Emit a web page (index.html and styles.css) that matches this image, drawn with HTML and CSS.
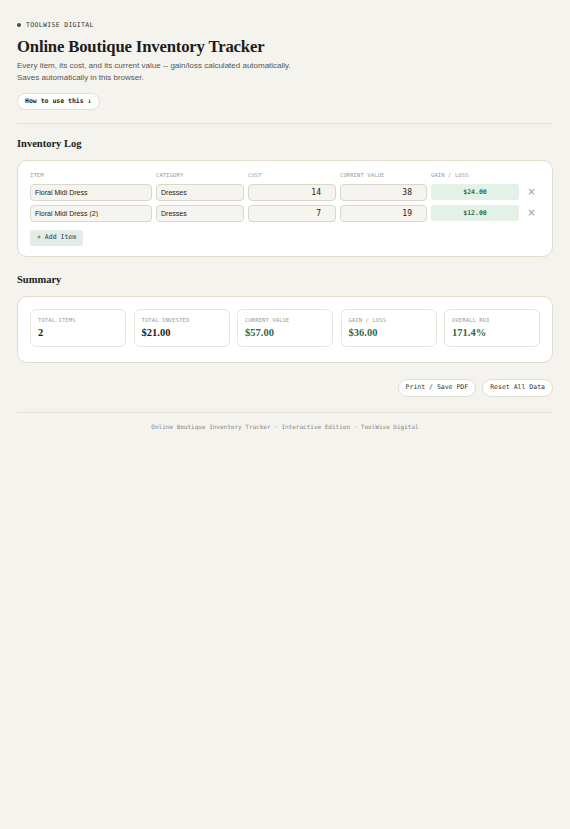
FILE: index.html
```html
<!DOCTYPE html>
<html lang="en">
<head>
<meta charset="utf-8">
<title>Online Boutique Inventory Tracker</title>
<link rel="stylesheet" href="styles.css">
</head>
<body>
<div class="page">
  <header class="hero">
    <div class="brand"><span class="brand-dot"></span>TOOLWISE DIGITAL</div>
    <h1 class="title">Online Boutique Inventory Tracker</h1>
    <p class="lead">Every item, its cost, and its current value -- gain/loss calculated automatically.<br>Saves automatically in this browser.</p>
    <button class="pill pill-bold">How to use this ↓</button>
  </header>
  <hr class="rule">
  <section class="section">
    <h2 class="section-title">Inventory Log</h2>
    <div class="card">
      <div class="grid head">
        <div class="col-label">ITEM</div>
        <div class="col-label">CATEGORY</div>
        <div class="col-label">COST</div>
        <div class="col-label">CURRENT VALUE</div>
        <div class="col-label">GAIN / LOSS</div>
        <div></div>
      </div>
      <div class="rows">
        <div class="grid row">
          <input class="field" value="Floral Midi Dress">
          <input class="field" value="Dresses">
          <input class="field num" value="14">
          <input class="field num" value="38">
          <div class="gain">$24.00</div>
          <button class="remove">×</button>
        </div>
        <div class="grid row">
          <input class="field" value="Floral Midi Dress (2)">
          <input class="field" value="Dresses">
          <input class="field num" value="7">
          <input class="field num" value="19">
          <div class="gain">$12.00</div>
          <button class="remove">×</button>
        </div>
      </div>
      <button class="add">+ Add Item</button>
    </div>
  </section>
  <section class="section section-summary">
    <h2 class="section-title">Summary</h2>
    <div class="card stats">
      <div class="stat"><div class="stat-label">TOTAL ITEMS</div><div class="stat-value">2</div></div>
      <div class="stat"><div class="stat-label">TOTAL INVESTED</div><div class="stat-value">$21.00</div></div>
      <div class="stat"><div class="stat-label">CURRENT VALUE</div><div class="stat-value green">$57.00</div></div>
      <div class="stat"><div class="stat-label">GAIN / LOSS</div><div class="stat-value green">$36.00</div></div>
      <div class="stat"><div class="stat-label">OVERALL ROI</div><div class="stat-value green">171.4%</div></div>
    </div>
  </section>
  <div class="actions">
    <button class="pill">Print / Save PDF</button>
    <button class="pill">Reset All Data</button>
  </div>
  <hr class="rule rule-bottom">
  <footer class="footer">Online Boutique Inventory Tracker · Interactive Edition · ToolWise Digital</footer>
</div>
</body>
</html>
```
FILE: styles.css
```css
* { box-sizing: border-box; }
html, body { margin: 0; padding: 0; }
body {
  background: #f5f3ee;
  color: #1c1c1a;
  font-family: "Liberation Sans", Arial, sans-serif;
}
.page {
  padding: 21px 17px 40px;
}
.brand {
  display: flex;
  align-items: center;
  gap: 5px;
  height: 8px;
  font-family: "DejaVu Sans Mono", monospace;
  font-size: 6.5px;
  line-height: 8px;
  letter-spacing: 0.05em;
  color: #333;
}
.brand-dot {
  width: 4px; height: 4px; border-radius: 50%;
  background: #2f5e44;
}
.title {
  font-family: "Liberation Serif", serif;
  font-weight: 700;
  font-size: 16.7px;
  letter-spacing: -0.01em;
  margin: 8px 0 3px;
  line-height: 20px;
}
.lead {
  margin: 0 0 9px;
  font-size: 8px;
  line-height: 12px;
  color: #555;
}
.pill {
  font-family: "DejaVu Sans Mono", monospace;
  font-size: 6.5px;
  color: #333;
  background: #fff;
  border: 1px solid #e2ddd1;
  border-radius: 10px;
  padding: 0 7px;
  height: 18px;
  line-height: 1;
}
.pill-bold { font-weight: 700; color: #1c1c1a; height: 17px; display: block; }
.rule {
  border: 0;
  border-top: 1px solid #e4e0d6;
  margin: 13px 0 0;
}
.section { margin-top: 14px; }
.section-summary { margin-top: 17px; }
.section-title {
  font-family: "Liberation Serif", serif;
  font-weight: 700;
  font-size: 10.5px;
  line-height: 12px;
  margin: 0 0 9.5px;
}
.card {
  background: #fff;
  border: 1.5px solid #e2dccd;
  border-radius: 10px;
  padding: 11px 12px 10.5px;
}
.grid {
  display: grid;
  grid-template-columns: 122px 88px 88px 87px 88px 1fr;
  gap: 4px;
  align-items: center;
}
.head { margin-bottom: 5px; }
.rows {
  display: flex;
  flex-direction: column;
  gap: 4px;
}
.col-label {
  font-family: "DejaVu Sans Mono", monospace;
  font-size: 5.5px;
  line-height: 7px;
  color: #999;
  letter-spacing: 0.02em;
}
.field {
  width: 100%;
  height: 17px;
  background: #f6f4ef;
  border: 1px solid #dcd7cb;
  border-radius: 4px;
  padding: 0 4px;
  font-family: "Liberation Sans", Arial, sans-serif;
  font-size: 7px;
  color: #222;
  outline: none;
}
.field.num {
  text-align: right;
  font-family: "DejaVu Sans Mono", monospace;
  font-size: 8px;
  padding-right: 14px;
}
.gain {
  height: 16px;
  background: #e3f1e6;
  border-radius: 3px;
  color: #2b7047;
  font-family: "DejaVu Sans Mono", monospace;
  font-weight: 700;
  font-size: 6.5px;
  display: flex;
  align-items: center;
  justify-content: center;
}
.remove {
  background: none;
  border: 0;
  padding: 0;
  color: #999;
  font-size: 10px;
  line-height: 1;
  font-family: "DejaVu Sans", sans-serif;
  text-align: center;
}
.add {
  display: block;
  margin-top: 8px;
  height: 16px;
  background: #e2ede7;
  border: 0;
  border-radius: 3px;
  padding: 0 7px;
  font-family: "DejaVu Sans Mono", monospace;
  font-size: 6.5px;
  color: #333;
  line-height: 1;
}
.stats {
  display: grid;
  grid-template-columns: repeat(5, 1fr);
  gap: 7.5px;
  padding: 12px 12px 14.5px;
}
.stat {
  border: 1px solid #e8e4da;
  border-radius: 6px;
  padding: 7px 7px;
}
.stat-label {
  font-family: "DejaVu Sans Mono", monospace;
  font-size: 5.5px;
  line-height: 7px;
  color: #999;
  letter-spacing: 0.02em;
  margin-bottom: 2.5px;
}
.stat-value {
  font-family: "Liberation Serif", serif;
  font-weight: 700;
  font-size: 10.5px;
  line-height: 13px;
  color: #1c1c1a;
}
.stat-value.green { color: #2e6b47; }
.actions {
  display: flex;
  justify-content: flex-end;
  gap: 6px;
  margin-top: 16px;
}
.rule-bottom { margin-top: 15px; }
.footer {
  text-align: center;
  font-family: "DejaVu Sans Mono", monospace;
  font-size: 6px;
  line-height: 7px;
  color: #888;
  margin-top: 10.5px;
}
```
